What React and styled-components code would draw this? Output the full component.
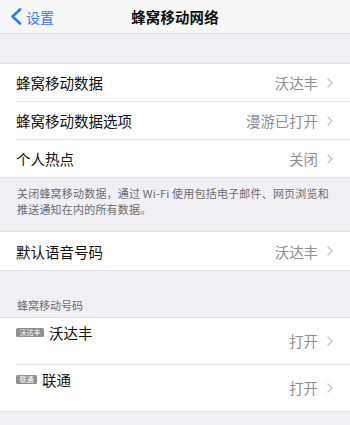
import React from 'react';
import styled, { createGlobalStyle } from 'styled-components';

const GlobalStyle = createGlobalStyle`
  html, body {
    margin: 0;
    padding: 0;
    background: #efeff4;
  }
  body {
    font-family: "Noto Sans CJK SC", "Liberation Sans", sans-serif;
    -webkit-font-smoothing: antialiased;
  }
`;

const Page = styled.div`
  width: 350px;
  height: 425px;
  overflow: hidden;
  background: #efeff4;
`;

const NavBar = styled.div`
  height: 33px;
  background: #f7f7f8;
  border-bottom: 1px solid #dedee2;
  display: flex;
  align-items: center;
  position: relative;
`;

const BackButton = styled.div`
  display: flex;
  align-items: center;
  gap: 4px;
  padding-left: 10px;
  color: #2f7cf6;
  font-size: 14px;
  z-index: 1;
`;

const NavTitle = styled.div`
  position: absolute;
  left: 0;
  right: 0;
  text-align: center;
  font-size: 14.4px;
  font-weight: 700;
  color: #111;
  letter-spacing: 0.2px;
`;

const Gap = styled.div`
  height: ${p => p.h}px;
`;

const Group = styled.div`
  background: #fff;
  border-top: 1px solid #e2e2e6;
  border-bottom: 1px solid #e2e2e6;
`;

const Row = styled.div`
  height: ${p => p.h || 37}px;
  margin-left: 16px;
  padding-right: 17px;
  display: flex;
  align-items: ${p => (p.top ? 'flex-start' : 'center')};
  border-bottom: ${p => (p.last ? 'none' : '1px solid #e4e4e7')};
`;

const Title = styled.div`
  flex: 1;
  display: flex;
  align-items: center;
  gap: 5px;
  font-size: 14.5px;
  color: #111;
  padding-top: ${p => p.pt || 0}px;
`;

const Value = styled.div`
  display: flex;
  align-items: center;
  gap: 9px;
  font-size: 14.4px;
  color: #8e8e93;
  padding-top: ${p => p.pt || 0}px;
  align-self: ${p => (p.pt ? 'flex-start' : 'auto')};
`;

const Badge = styled.span`
  display: inline-flex;
  align-items: center;
  justify-content: center;
  height: 9px;
  padding: 0 3.5px;
  border-radius: 1.5px;
  background: #8f8f94;
  color: #fff;
  font-size: 7px;
  line-height: 9px;
`;

const Footer = styled.div`
  padding: 7px 16px 14px 17px;
  font-size: 11px;
  line-height: 16px;
  color: #6d6d72;
  letter-spacing: 0.2px;
`;

const SectionHeader = styled.div`
  padding: 27px 17px 5px;
  font-size: 11px;
  line-height: 14px;
  color: #6d6d72;
`;

const Chevron = () => (
  <svg width="6" height="10" viewBox="0 0 6 10">
    <path d="M1 1 L5 5 L1 9" fill="none" stroke="#c4c4c9" strokeWidth="1.3" strokeLinecap="round" strokeLinejoin="round" />
  </svg>
);

const BackChevron = () => (
  <svg width="12" height="17" viewBox="0 0 12 17">
    <path d="M10 1.5 L2.5 8.5 L10 15.5" fill="none" stroke="#2f7cf6" strokeWidth="2.6" strokeLinecap="round" strokeLinejoin="round" />
  </svg>
);

const Cell = ({ title, value, h, last }) => (
  <Row h={h} last={last}>
    <Title>{title}</Title>
    <Value>
      {value}
      <Chevron />
    </Value>
  </Row>
);

const SimCell = ({ badge, title, last }) => (
  <Row h={46} top last={last}>
    <Title pt={4}>
      <Badge>{badge}</Badge>
      {title}
    </Title>
    <Value pt={12}>
      打开
      <Chevron />
    </Value>
  </Row>
);

export default function App() {
  return (
    <Page>
      <GlobalStyle />
      <NavBar>
        <BackButton>
          <BackChevron />
          设置
        </BackButton>
        <NavTitle>蜂窝移动网络</NavTitle>
      </NavBar>
      <Gap h={29} />
      <Group>
        <Cell title="蜂窝移动数据" value="沃达丰" />
        <Cell title="蜂窝移动数据选项" value="漫游已打开" />
        <Cell title="个人热点" value="关闭" last />
      </Group>
      <Footer>
        关闭蜂窝移动数据，通过 Wi-Fi 使用包括电子邮件、网页浏览和推送通知在内的所有数据。
      </Footer>
      <Group>
        <Cell title="默认语音号码" value="沃达丰" h={38} last />
      </Group>
      <SectionHeader>蜂窝移动号码</SectionHeader>
      <Group>
        <SimCell badge="沃达丰" title="沃达丰" />
        <SimCell badge="联通" title="联通" last />
      </Group>
    </Page>
  );
}
